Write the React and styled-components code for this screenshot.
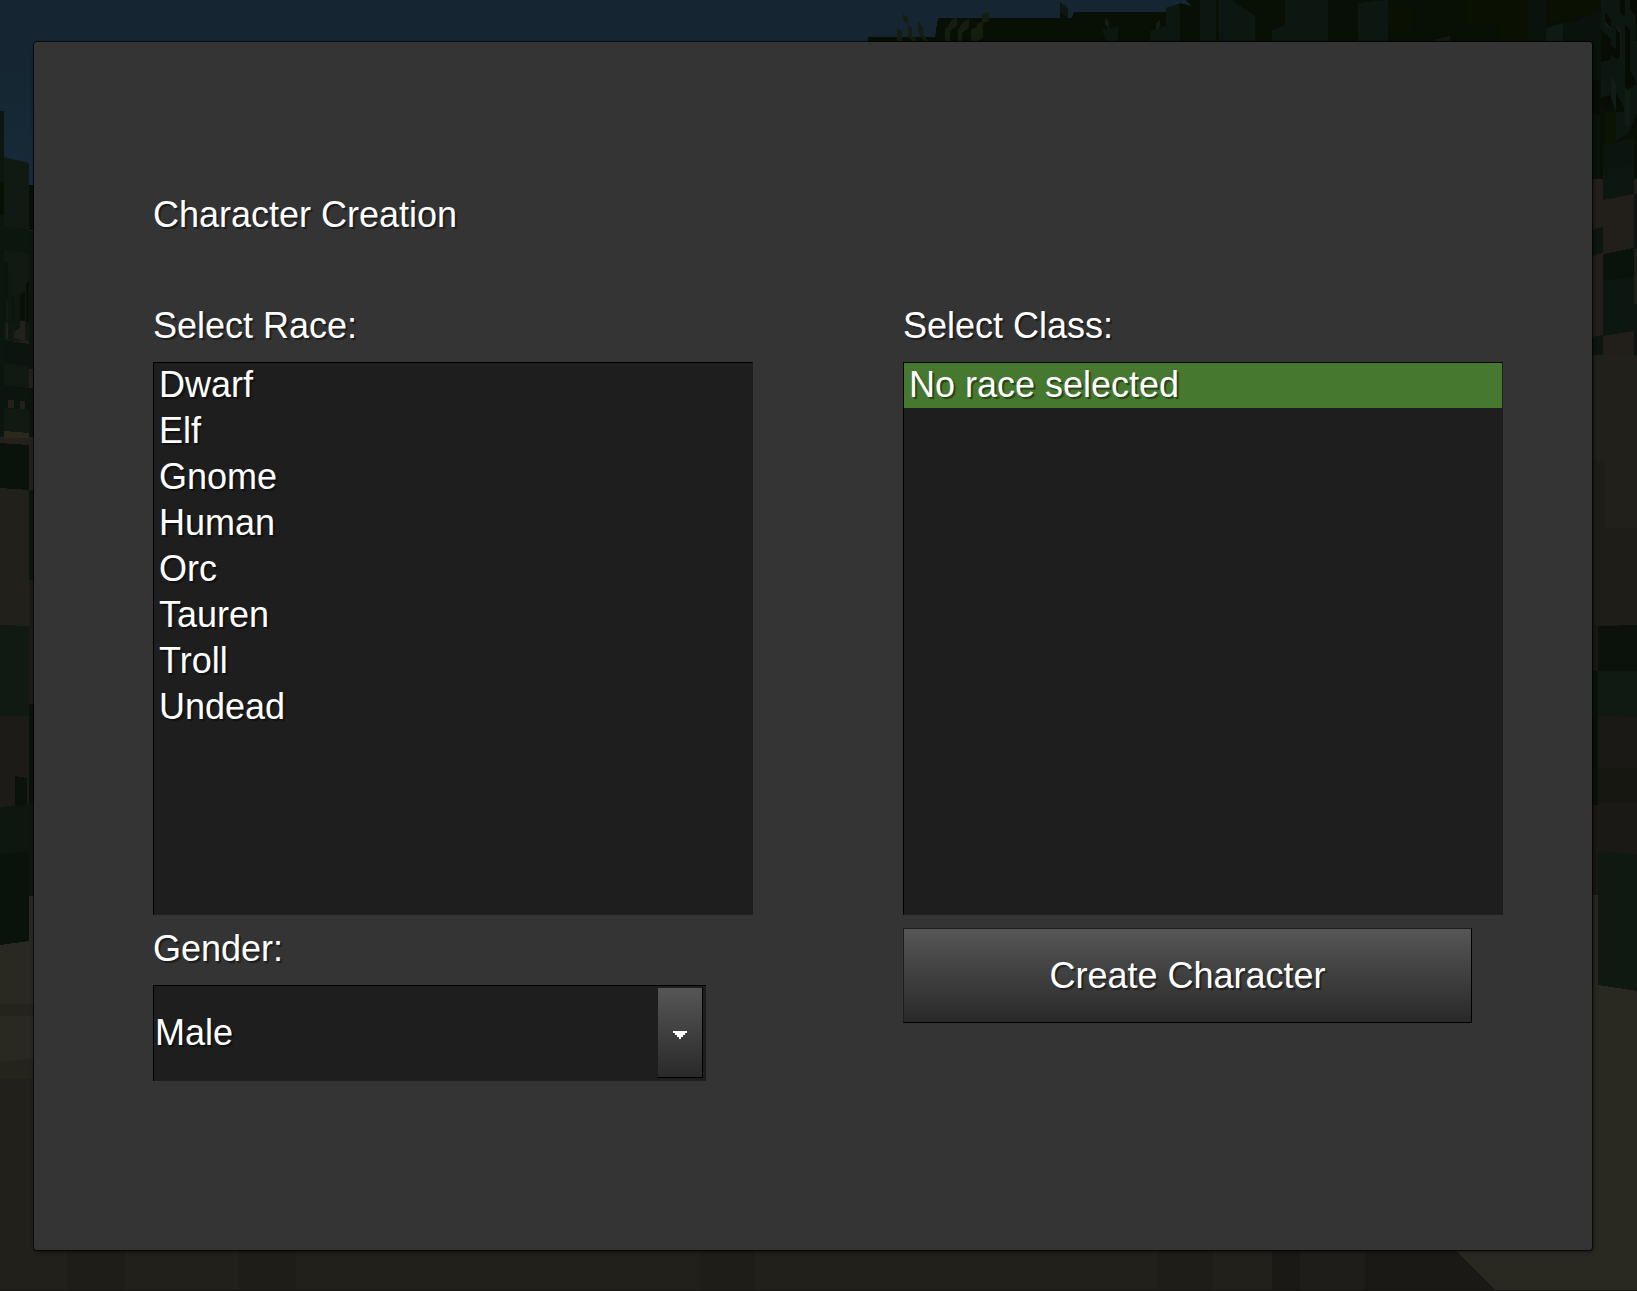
import React, { useState } from "react";
import styled, { createGlobalStyle } from "styled-components";

const GlobalStyle = createGlobalStyle`
  *, *::before, *::after { box-sizing: border-box; }
  body {
    margin: 0;
    background: #21201b;
    color: #ffffff;
    font: 36px/42px "Liberation Sans", Arial, sans-serif;
    text-shadow: 2px 2px 1px rgba(0, 0, 0, 0.45);
  }
`;

const Screen = styled.div`
  position: relative;
  isolation: isolate;
  min-height: 100vh;
  padding: 42px 45px 41px 34px;
`;

const Backdrop = styled.svg`
  position: absolute;
  inset: 0;
  z-index: -1;
  width: 100%;
  height: 100%;
`;

const Panel = styled.main`
  padding: 152px 89px 169px 119px;
  background: #343434;
  border-radius: 3px;
  box-shadow: 0 0 0 1px rgba(0, 0, 0, 0.6), 1px 1px 4px rgba(0, 0, 0, 0.7);
`;

const Title = styled.h1`
  margin: 0 0 69px;
  font: inherit;
`;

const Columns = styled.form`
  display: grid;
  grid-template-columns: 1fr 1fr;
  align-items: start;
  column-gap: 150px;
`;

const Column = styled.div`
  display: flex;
  flex-direction: column;
  align-items: flex-start;
`;

const Group = styled.fieldset`
  width: 100%;
  min-width: 0;
  margin: 0;
  padding: 0;
  border: 0;
`;

const Legend = styled.legend`
  margin-bottom: 15px;
  padding: 0;
`;

const List = styled.div`
  display: flex;
  flex-direction: column;
  gap: 1px;
  min-height: 553px;
  background: #1e1e1e;
  border: 1px solid #1e1e1e;
  border-top-color: #000000;
  border-left-color: #000000;
`;

const Row = styled.label`
  padding: 1px 5px 2px;
  background: ${({ $selected }) => ($selected ? "#46782f" : "transparent")};
`;

const Radio = styled.input`
  position: absolute;
  opacity: 0;
  pointer-events: none;
`;

const FieldLabel = styled.label`
  margin: 13px 0 15px;
`;

const SelectBox = styled.div`
  position: relative;
  width: calc(100% - 47px);
`;

const Select = styled.select`
  display: block;
  width: 100%;
  height: 96px;
  padding: 0 52px 2px 1px;
  appearance: none;
  background: #1e1e1e;
  border: solid #000000;
  border-width: 1px 0 0 1px;
  border-radius: 0;
  color: inherit;
  font: inherit;
  text-shadow: inherit;
`;

const bevel = `
  background: linear-gradient(#565656, #292929);
  border: 1px solid #000000;
  border-top-color: #1e1e1e;
  border-left-color: #1e1e1e;
`;

const DropArrow = styled.span`
  position: absolute;
  top: 2px;
  right: 3px;
  bottom: 3px;
  display: grid;
  place-items: center;
  width: 46px;
  padding-top: 4px;
  pointer-events: none;
  ${bevel}
`;

const CreateButton = styled.button`
  width: calc(100% - 31px);
  height: 95px;
  margin-top: 13px;
  padding: 0;
  border-radius: 0;
  color: inherit;
  font: inherit;
  text-shadow: inherit;
  cursor: pointer;
  ${bevel}
`;

const races = ["Dwarf", "Elf", "Gnome", "Human", "Orc", "Tauren", "Troll", "Undead"];
const classes = ["No race selected"];

function ChoiceList({ legend, name, options, value, onChange }) {
  return (
    <Group>
      <Legend>{legend}</Legend>
      <List>
        {options.map((option) => (
          <Row key={option} $selected={option === value}>
            <Radio
              type="radio"
              name={name}
              value={option}
              checked={option === value}
              onChange={() => onChange(option)}
            />
            {option}
          </Row>
        ))}
      </List>
    </Group>
  );
}

function Forest() {
  return (
    <Backdrop viewBox="0 0 1637 1291" preserveAspectRatio="none" aria-hidden="true" shapeRendering="crispEdges">
      <defs>
        <linearGradient id="sky" x1="0" y1="0" x2="0" y2="1">
          <stop offset="0" stopColor="#152531" />
          <stop offset="0.5" stopColor="#152733" />
          <stop offset="1" stopColor="#192b3b" />
        </linearGradient>
      </defs>
      <path fill="#21201b" d="M0 0H1637V1291H0z" />
      <path fill="url(#sky)" d="M0 0H1300V185H0z" />

      {/* canopy along the top */}
      <path
        fill="#080f04"
        d="M868 42V37H935L938 18H1060V2L1068 8V18H1072L1074 12H1166V8L1180 3L1192 6L1185 0H1637V179H1592V42z"
      />
      <path
        fill="#0d1712"
        d="M1060 2L1068 8V18L1060 12zM1166 8L1180 3V41H1166zM1200 0H1216V41H1200zM1219 0H1231V41H1219zM1231 0L1255 16V41H1224V20H1231zM1285 0H1328V41H1272V30L1285 26zM1358 3L1388 0V41H1358zM1102 30L1118 26V41H1106zM1150 31L1166 26V41H1150z"
      />
      <path fill="#0a1102" d="M1466 0H1528V41H1500V24H1466zM1388 6H1412V30H1388zM1216 0H1219V41H1216zM1546 0H1600V12L1550 22H1546z" />
      <path fill="#0a120d" d="M1528 0H1546V41H1528zM1582 18L1601 12V41H1563V23L1582 20z" />
      <path fill="#101a14" d="M1546 28L1563 23V41H1546zM1434 40L1450 36V41H1434z" />
      <path
        fill="#141d0e"
        d="M903 14L908 17V24L903 21zM897 28L902 31V41H897zM908 25L912 28V36L917 41H912L908 37zM918 22L923 26V34L928 41H924L918 32zM953 19L957 17V26L950 31V41H945V30zM963 22L969 19V28L962 33V41H958V30zM982 14L989 12V21L982 24zM977 24L983 21V38L977 41H971V29L977 27zM1105 18L1109 22V28L1105 25zM1156 23L1160 19V27L1156 30z"
      />

      {/* left edge */}
      <path fill="#0b160e" d="M0 111H4V443H0zM29 231H34V370H29zM4 226H29V255H4z" />
      <path fill="#080f04" d="M0 182H4V215H0zM29 185H34V230H29z" />
      <path fill="#101a12" d="M4 157L29 163V230L4 226zM4 250L29 254V341H4z" />
      <path fill="#0b140d" d="M4 262H8V300H6V322H4zM12 297L14 299V322H12zM20 300V294L25 290V322H20z" />
      <path fill="#080f04" d="M20 296L25 292V320H20zM26 284L29 280V322H26z" />
      <path fill="#0d1810" d="M8 270H12V340H8zM14 296L20 292V330L14 338z" />
      <path fill="#24211d" d="M6 323H8V339H6zM20 321H25V341L14 338V332L20 328z" />
      <path fill="#0b140e" d="M4 340L29 344V367L4 363zM0 365H4V431H0zM4 385L29 388V410H4zM29 370H34V437H29z" />
      <path fill="#101a13" d="M4 363L29 367V388L4 385zM4 408L29 410V433L4 431z" />
      <path fill="#24211d" d="M29 369H33V388H29zM8 400H14V408H8zM20 401H25V409H20zM0 437H34V490H0z" />
      <path fill="#2b281c" d="M4 431L29 433V438H4z" />
      <path fill="#09130c" d="M0 443L29 445V490L0 488z" />
      <path fill="#21201b" d="M0 488L29 490V626H0z" />
      <path fill="#0b160e" d="M29 490H34V580H29z" />
      <path fill="#101a13" d="M0 625L29 626V716H0z" />
      <path fill="#1d1b18" d="M0 716H29V808H0zM29 580H34V704H29z" />
      <path fill="#09120b" d="M15 776L27 778V806H15zM29 704H34V806H29z" />
      <path fill="#0d160f" d="M0 807L34 804V896H29V851L0 855z" />
      <path fill="#2a2921" d="M0 920H34V1079H0zM29 896H34V945H29z" />
      <path fill="#09120b" d="M0 854L29 851V941L0 945z" />
      <path fill="#25241c" d="M0 1004H34V1016H0zM0 1062L34 1058V1079H0z" />

      {/* right edge */}
      <path fill="#0a120c" d="M1592 42H1601V82H1592zM1592 115H1600V179H1592z" />
      <path fill="#0d1712" d="M1601 0H1637V112L1628 134L1616 140V112L1610 96L1601 97z" />
      <path fill="#121c16" d="M1605 14L1611 20V30L1605 26zM1605 38L1611 44V59L1605 52zM1616 25L1621 30V58L1616 60zM1611 76L1616 84V112L1611 96zM1625 88L1630 92V125H1625z" />
      <path
        fill="#070d05"
        d="M1605 13L1611 18V28L1605 22zM1601 30L1611 38V60L1601 62zM1616 28L1620 34V58L1616 60L1611 54V45L1616 50zM1620 0H1625V18L1620 12zM1625 24L1630 30V70L1637 84L1627 90L1625 86zM1630 0H1637V50L1635 14L1630 10zM1601 97L1611 95V110L1601 104zM1616 92L1624 108V112H1616zM1593 80H1600V114H1593z"
      />
      <path fill="#0b1402" d="M1605 112H1616V142L1605 145z" />
      <path fill="#0b150f" d="M1603 145L1634 138V179H1603z" />
      <path fill="#221f1b" d="M1592 179H1637V355H1592z" />
      <path fill="#21201b" d="M1592 355H1637V640H1592z" />
      <path fill="#0d1711" d="M1603 170L1634 165V194L1603 200zM1592 230L1603 227V253L1592 256zM1603 254L1634 248V331L1603 336zM1592 337L1603 335V355H1592zM1634 194L1637 193V249H1634zM1634 304H1637V355H1634z" />
      <path fill="#09120b" d="M1603 254L1634 248V277L1603 281z" />
      <path fill="#1e1d18" d="M1592 460H1605V530H1592zM1592 528H1637V625H1592z" />
      <path fill="#1b1916" d="M1592 625H1637V895H1592z" />
      <path fill="#0a120b" d="M1598 626L1637 625V671H1598zM1592 671H1598V805H1592z" />
      <path fill="#101a12" d="M1598 671H1637V717L1598 716z" />
      <path fill="#171712" d="M1598 768H1637V803H1598z" />
      <path fill="#2a2921" d="M1592 895H1637V1291H1497L1455 1250H1592z" />
      <path fill="#0f1811" d="M1598 851L1637 854V991L1598 985z" />

      {/* ground along the bottom */}
      <path fill="#1e1d18" d="M67 1250H125V1291H67zM239 1250H296V1291H239zM700 1250H755V1291H700zM1158 1250H1213V1291H1158z" />
      <path fill="#1a1916" d="M1272 1250H1455L1497 1291H1272z" />
      <path fill="#1e1d19" d="M1300 1250H1365V1291H1300z" />
      <path fill="#171612" d="M0 1290H1637V1291H0z" />
    </Backdrop>
  );
}

export default function App() {
  const [race, setRace] = useState("");
  const [role, setRole] = useState(classes[0]);

  return (
    <Screen>
      <GlobalStyle />
      <Forest />
      <Panel>
        <Title>Character Creation</Title>
        <Columns onSubmit={(event) => event.preventDefault()}>
          <Column>
            <ChoiceList legend="Select Race:" name="race" options={races} value={race} onChange={setRace} />
            <FieldLabel htmlFor="gender">Gender:</FieldLabel>
            <SelectBox>
              <Select id="gender" defaultValue="Male">
                <option>Male</option>
                <option>Female</option>
              </Select>
              <DropArrow>
                <svg width="14" height="8" viewBox="0 0 14 8" fill="#ffffff" shapeRendering="crispEdges" aria-hidden="true">
                  <path d="M0 0H14V2H12V4H10V6H8V8H6V6H4V4H2V2H0z" />
                </svg>
              </DropArrow>
            </SelectBox>
          </Column>
          <Column>
            <ChoiceList legend="Select Class:" name="class" options={classes} value={role} onChange={setRole} />
            <CreateButton type="submit">Create Character</CreateButton>
          </Column>
        </Columns>
      </Panel>
    </Screen>
  );
}
